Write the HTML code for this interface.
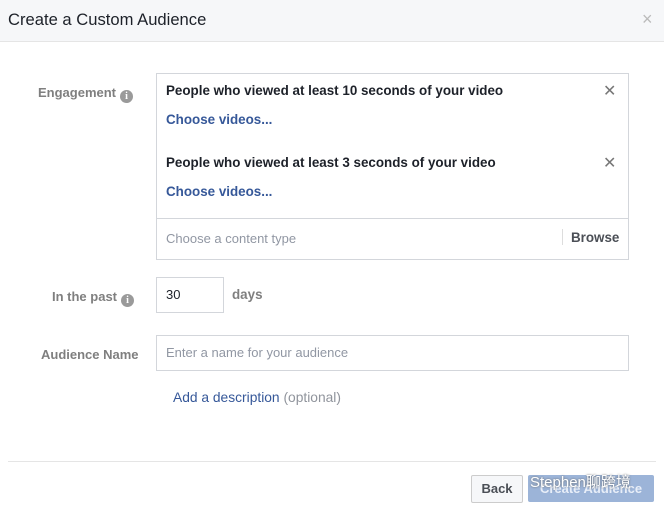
<!DOCTYPE html>
<html><head><style>
body{margin:0;width:664px;height:512px;background:#fff;font-family:"Liberation Sans",Arial,sans-serif;position:relative;overflow:hidden}
.a{position:absolute}
.hdr{left:0;top:0;width:664px;height:41px;background:#f6f7f9;border-bottom:1px solid #e5e5e5}
.lbl{color:#7f7f7f;font-weight:bold;font-size:13px;text-align:right}
.i{display:inline-block;width:13px;height:13px;border-radius:50%;background:#9a9a9a;color:#fff;font-size:10px;text-align:center;line-height:13px;vertical-align:-2px;margin-left:4px;font-family:"Liberation Serif",serif;font-weight:bold}
.t{font-size:13.4px;font-weight:bold;color:#1d2129}
.lnk{font-size:13.4px;font-weight:bold;color:#365899}
.x{font-size:16px;color:#777}
.box{border:1px solid #d3d6db}
.ph{font-size:13px;color:#9197a3}
</style></head><body>
<div class="a hdr"></div>
<div class="a" style="left:8px;top:10px;font-size:16.6px;color:#1d2129">Create a Custom Audience</div>
<div class="a" style="left:642px;top:9px;font-size:18px;color:#bbb">×</div>
<div class="a lbl" style="left:38px;top:85px">Engagement<span class="i">i</span></div>
<div class="a box" style="left:156px;top:73px;width:471px;height:144px"></div>
<div class="a t" style="left:166px;top:83px">People who viewed at least 10 seconds of your video</div>
<div class="a x" style="left:603px;top:81px">✕</div>
<div class="a lnk" style="left:166px;top:112px">Choose videos...</div>
<div class="a t" style="left:166px;top:155px">People who viewed at least 3 seconds of your video</div>
<div class="a x" style="left:603px;top:153px">✕</div>
<div class="a lnk" style="left:166px;top:184px">Choose videos...</div>
<div class="a box" style="left:156px;top:218px;width:471px;height:40px"></div>
<div class="a ph" style="left:166px;top:231px">Choose a content type</div>
<div class="a" style="left:562px;top:229px;width:1px;height:16px;background:#ddd"></div>
<div class="a" style="left:571px;top:230px;font-size:13.4px;font-weight:bold;color:#4b4f56">Browse</div>
<div class="a lbl" style="left:52px;top:289px">In the past<span class="i">i</span></div>
<div class="a box" style="left:156px;top:277px;width:66px;height:34px"></div>
<div class="a" style="left:166px;top:287px;font-size:13px;color:#1d2129">30</div>
<div class="a lbl" style="left:232px;top:287px;color:#7f7f7f;font-size:13.4px">days</div>
<div class="a lbl" style="left:41px;top:347px">Audience Name</div>
<div class="a box" style="left:156px;top:335px;width:471px;height:34px"></div>
<div class="a ph" style="left:166px;top:345px">Enter a name for your audience</div>
<div class="a" style="left:173px;top:390px;font-size:13.8px;color:#365899">Add a description <span style="color:#90949c">(optional)</span></div>
<div class="a" style="left:8px;top:461px;width:648px;height:1px;background:#e5e5e5"></div>
<div class="a" style="left:471px;top:475px;width:50px;height:26px;border:1px solid #ccc;background:#f6f7f9;border-radius:2px;font-size:13px;font-weight:bold;color:#4b4f56;line-height:26px;text-align:center">Back</div>
<div class="a" style="left:528px;top:475px;width:126px;height:27px;background:#9cb4d8;border-radius:2px;font-size:13px;font-weight:bold;color:#e8eef8;line-height:27px;text-align:center">Create Audience</div>
<div class="a" style="left:530px;top:471px;font-size:15px;color:#fff;text-shadow:0 0 2px #666;font-family:'Liberation Sans','Noto Sans CJK SC',sans-serif">Stephen聊跨境</div>
</body></html>
